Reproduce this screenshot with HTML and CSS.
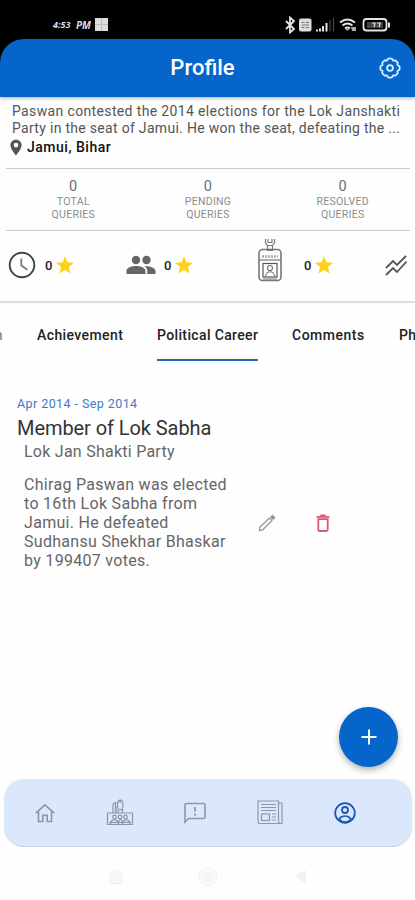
FILE: index.html
```html
<!DOCTYPE html>
<html lang="en">
<head>
<meta charset="utf-8">
<title>Profile</title>
<link rel="stylesheet" href="styles.css">
</head>
<body>
<div class="top">
  <div class="status">
    <span class="clock">4:53</span><span class="clock pm">PM</span>
    <svg class="app" width="13" height="13" viewBox="0 0 13 13"><path fill="#ddd" d="M0 0h13v13H0z"/><path stroke="#bbb" d="M0 6.500h13M6.500 0v13" fill="none"/></svg>
    <svg class="indicators" width="106" height="18" viewBox="0 0 106 18" fill="none" stroke="#e4e4e4" stroke-width="1.500">
      <path d="M1 5l8 8-4 3.500V1.500L9 5l-8 8" stroke-width="1.800"/>
      <rect x="14" y="2.500" width="12.500" height="13" rx="2" fill="#ddd" stroke="none"/>
      <path d="M16.500 6.500h3M21 6.500h3M16.500 11.500h3M21 11.500h3M17 9h7" stroke="#777" stroke-width="1.200"/>
      <path d="M32 15.500v-2M35 15.500v-3M38 15.500V10M41.500 15.500V7" stroke-width="2"/>
      <path d="M45 15.500V4M48.500 15.500V2" stroke="#444" stroke-width="1.300"/>
      <path d="M55 6.500q7.500-6 15 0M57.500 9.500q5-4 10 0M60 12.500q2.500-2 5 0" stroke-width="2"/>
      <path d="M62.500 15l-2-2h4zM66 11h5v4h-4" fill="#aaa" stroke="none"/>
      <rect x="78.500" y="3" width="23" height="11.500" rx="3" stroke-width="1.800"/>
      <path d="M82 6h16v6H82z" fill="#444" stroke="none"/><path d="M87 7h3l-1 4M92 7h3l-1 4" stroke-width="1.200"/>
      <path d="M104 6.500v5" stroke-width="2"/>
    </svg>
  </div>
  <header class="bar">
    <h1>Profile</h1>
    <svg class="gear" width="22" height="22" viewBox="0 0 22 22" fill="none" stroke="#dcecff" stroke-width="1.800"><path stroke-linejoin="round" d="M9 1.800q2-1 4 0l1 1.700 2.300-.2 2.400 2.400-.2 2.300 1.700 1q1 2 0 4l-1.700 1 .2 2.300-2.400 2.400-2.300-.2-1 1.700q-2 1-4 0l-1-1.700-2.300.2-2.400-2.400.2-2.300-1.700-1q-1-2 0-4l1.700-1-.2-2.300 2.400-2.400 2.300.2z"/><circle cx="11" cy="11" r="2.900"/></svg>
  </header>
</div>
<main>
  <section class="bio">
    <p class="b1">Paswan contested the 2014 elections for the Lok Janshakti</p>
    <p class="b2">Party in the seat of Jamui. He won the seat, defeating the ...</p>
    <div class="place">
      <svg width="12" height="17" viewBox="0 0 12 17"><path fill="#555" fill-rule="evenodd" d="M6 .5A5.600 5.600 0 0 0 .4 6.100C.4 10.300 6 16.500 6 16.500s5.600-6.200 5.600-10.400A5.600 5.600 0 0 0 6 .5zm0 3.300a2.300 2.300 0 1 1 0 4.600 2.300 2.300 0 0 1 0-4.600z"/></svg>
      <span>Jamui, Bihar</span>
    </div>
  </section>
  <section class="stats">
    <div class="stat"><b>0</b><span>TOTAL</span><span>QUERIES</span></div>
    <div class="stat"><b>0</b><span>PENDING</span><span>QUERIES</span></div>
    <div class="stat"><b>0</b><span>RESOLVED</span><span>QUERIES</span></div>
  </section>
  <section class="scores">
    <div class="score s1">
      <svg width="28" height="28" viewBox="0 0 28 28" fill="none" stroke="#444"><circle cx="14" cy="14" r="12.300" stroke-width="1.900"/><path d="M13.300 7.500v7l6 4.200" stroke="#777" stroke-width="1.700"/></svg>
      <span>0</span>
      <svg class="star" width="18" height="18" viewBox="0 0 18 18"><path d="M9 .2l2.400 6.100 6.500.4-5 4.200 1.700 6.600L9 13.900l-5.600 3.600 1.700-6.600-5-4.200 6.500-.4z"/></svg>
    </div>
    <div class="score s2">
      <svg width="30" height="20" viewBox="0 0 30 20" fill="#666"><circle cx="10" cy="5" r="4.200"/><circle cx="20.500" cy="5" r="4.200"/><path d="M.5 19v-3c0-3.200 5-5 9.500-5s9.500 1.800 9.500 5v3zM21.300 19v-3c0-2-1-3.700-2.800-4.800 4.800-.4 11 1.500 11 4.800v3z"/><path d="M15.300.5v9" stroke="#fff" stroke-width="1.300"/></svg>
      <span>0</span>
      <svg class="star" width="18" height="18" viewBox="0 0 18 18"><path d="M9 .2l2.400 6.100 6.500.4-5 4.200 1.700 6.600L9 13.900l-5.600 3.600 1.700-6.600-5-4.200 6.500-.4z"/></svg>
    </div>
    <div class="score s3">
      <svg class="badge" width="24" height="44" viewBox="0 0 24 44" fill="none" stroke="#777" stroke-width="1.200"><path d="M7.500 1v4l2 2.500h5l2-2.500V1M10 1v3.500h4V1M9.500 7.500v5h5v-5"/><rect x="1" y="11.500" width="22" height="31" rx="3.500" stroke-width="1.600"/><path d="M1 22h22"/><path d="M4 18.500h16" stroke="#aaa" stroke-width="2.500" stroke-dasharray="2 1"/><rect x="5" y="25.500" width="14" height="13.500" stroke="#555"/><circle cx="12" cy="30" r="2.500"/><path d="M7.500 39c0-7 9-7 9 0M5 41h14"/></svg>
      <span>0</span>
      <svg class="star" width="18" height="18" viewBox="0 0 18 18"><path d="M9 .2l2.400 6.100 6.500.4-5 4.200 1.700 6.600L9 13.900l-5.600 3.600 1.700-6.600-5-4.200 6.500-.4z"/></svg>
    </div>
    <svg class="trend" width="22" height="21" viewBox="0 0 22 21" fill="none" stroke="#555" stroke-width="1.800"><path d="M1 13l7-7 4 4 9-9M1 20l7-7 4 4 9.500-10.500"/></svg>
  </section>
  <nav class="tabs">
    <div class="tab cut"><span>n</span></div>
    <div class="tab t1">Achievement</div>
    <div class="tab t2 on">Political Career</div>
    <div class="tab t3">Comments</div>
    <div class="tab t4">Photos</div>
  </nav>
  <article class="career">
    <p class="date">Apr 2014 - Sep 2014</p>
    <h2>Member of Lok Sabha</h2>
    <p class="party">Lok Jan Shakti Party</p>
    <div class="detail">
      <p>Chirag Paswan was elected<br>to 16th Lok Sabha from<br>Jamui. He defeated<br>Sudhansu Shekhar Bhaskar<br>by 199407 votes.</p>
      <svg class="pencil" width="18" height="18" viewBox="0 0 18 18" fill="none" stroke="#999" stroke-width="1.300"><path stroke-linejoin="round" d="M1.500 16.500l.3-3.200L11.500 4l2.500 2.500L4.500 16z"/><path d="M13 3l1.500-1.500 2.200 2.200L15.200 5.200z" fill="#777"/></svg>
      <svg class="trash" width="14" height="18" viewBox="0 0 14 18" fill="none" stroke="#df5872" stroke-width="1.800"><path d="M.5 2.800h13M4.300 1.500h5.400M2.300 5.200h9.400v10.300q0 1.500-1.500 1.500H3.800q-1.500 0-1.500-1.500z"/></svg>
    </div>
  </article>
</main>
<button class="fab" aria-label="Add"><svg width="16" height="16" viewBox="0 0 16 16" stroke="#fff" stroke-width="2"><path d="M8 .5v15M.5 8h15"/></svg></button>
<nav class="dock">
  <svg width="20" height="20" viewBox="0 0 20 20" fill="none" stroke="#8b95ae" stroke-width="1.600"><path d="M.8 10.200L10 1.800l9.200 8.400M3.500 8.500V18.500h4.300v-6.300h4.400v6.300h4.300V8.500"/></svg>
  <svg width="28" height="27" viewBox="0 0 28 27" fill="none" stroke="#8b95a8" stroke-width="1.200"><path d="M1.500 14h25v11.500h-25zM7 14V6q0-2 2.500-2.500v9M10 14V7"/><ellipse cx="14.200" cy="6" rx="2.800" ry="4.800"/><path d="M12 11v3M16.500 10v4M14.200 1v3"/><circle cx="8.500" cy="18" r="1.800"/><circle cx="14" cy="18" r="1.800"/><circle cx="19.500" cy="18" r="1.800"/><path d="M4.500 25c0-5 7-6 8 0 0-6 4-6 4 0 1-6 7-5 7.500 0M3 23.500h22"/></svg>
  <svg width="22" height="22" viewBox="0 0 22 22" fill="none" stroke="#8b95ae" stroke-width="1.600"><path d="M1 20V3q0-1.500 1.500-1.500h17Q21 1.500 21 3v12q0 1.500-1.500 1.500H4.500z"/><path d="M11 5v4.500M11 11.500v2.200" stroke-width="1.800"/></svg>
  <svg width="26" height="25" viewBox="0 0 26 25" fill="none" stroke="#8e98aa" stroke-width="1.200"><path d="M1 1h20.500v19.500q0 3 1.700 3H3q-2 0-2-2zM21.500 3h3.500v20.500h-2"/><path d="M4 4.500h15M4 7.500h15M4 10.500h15M15 14h4M15 17h4M15 20h4"/><rect x="4.500" y="14" width="8" height="6.500"/></svg>
  <svg width="22" height="22" viewBox="0 0 22 22" fill="none" stroke="#1759b5" stroke-width="1.800"><circle cx="11" cy="11" r="9.800"/><circle cx="11" cy="8" r="3"/><path d="M5 17c3-4 9-4 12 0-3 4-9 4-12 0" stroke-width="1.600"/></svg>
</nav>
<footer class="system">
  <svg width="14" height="14" viewBox="0 0 14 14"><rect width="14" height="13" rx="2" fill="#f8f8f8"/><path d="M0 13.500h14" stroke="#eee"/></svg>
  <svg width="20" height="20" viewBox="0 0 20 20"><circle cx="10" cy="10" r="9" fill="#fafafa" stroke="#f0f0f0"/><circle cx="10" cy="10" r="5" fill="#f5f5f5"/></svg>
  <svg width="14" height="16" viewBox="0 0 14 16"><path d="M1 7l12-6v14z" fill="#f2f2f2"/></svg>
</footer>
</body>
</html>
```
FILE: styles.css
```css
* { box-sizing: border-box; margin: 0; padding: 0; }
body { width: 415px; height: 900px; overflow: hidden; background: #fefefe; font-family: Roboto, sans-serif; display: flex; flex-direction: column; }
svg { display: block; flex: none; }
p, span, h1, h2, .tab { white-space: nowrap; }
.top { background: #000; flex: none; }
.status { height: 39px; display: flex; align-items: center; padding: 10px 0 0 53px; }
.clock { color: #ddd; font: italic 700 9px/12px "Open Sans", sans-serif; width: 23px; }
.clock.pm { width: 18px; font-size: 10px; }
.indicators { margin-left: 177px; }
.app { margin-left: 1px; }
.bar { height: 58px; background: #0565cb; border-radius: 24px 24px 0 0; position: relative; box-shadow: 0 1px 4px rgba(0,0,0,.35); text-align: center; }
.bar h1 { font-size: 22px; line-height: 58px; font-weight: 500; color: #fff; padding-right: 10px; }
.gear { position: absolute; right: 14px; top: 18px; }
main { flex: none; height: 608px; }
.bio { height: 71px; padding: 6px 12px 0; color: #555; font-size: 14px; line-height: 17px; letter-spacing: .36px; }
.b2 { letter-spacing: .3px; }
.place { display: flex; gap: 4px; margin-left: -2px; margin-top: 2px; height: 17px; align-items: center; color: #111; font-weight: 500; letter-spacing: .5px; }
.place span { margin-left: 1px; }
.stats { margin: 0 5px 0 6px; height: 63px; border: solid #ccc; border-width: 1px 0; display: grid; grid-template-columns: repeat(3, 134.700px); }
.stat { display: flex; flex-direction: column; align-items: center; padding-top: 9px; font-size: 10.500px; line-height: 13px; color: #8c8c8c; letter-spacing: .3px; }
.stat b { font-weight: 400; font-size: 14.500px; line-height: 17px; color: #65707a; }
.scores { height: 72px; border-bottom: 2px solid #ddd; display: flex; align-items: center; padding-bottom: 2px; }
.score { display: flex; align-items: center; color: #222; font-size: 13px; font-weight: 500; }
.score span { width: 8px; }
.star { fill: #ffd21a; margin-left: 3px; }
.s1 { padding-left: 8px; width: 126px; }
.s1 span { margin-left: 9px; }
.s2 { width: 132px; }
.s2 span { margin-left: 8px; }
.s3 { width: 127px; }
.s3 span { margin-left: 22px; }
.badge { margin-top: -10px; }
.tabs { height: 58px; display: flex; gap: 34px; font-size: 14px; font-weight: 500; color: #222; line-height: 20px; padding-top: 22px; overflow: hidden; letter-spacing: .4px; }
.tab { flex: none; height: 36px; }
.cut { width: 3px; overflow: hidden; display: flex; justify-content: flex-end; color: #888; }
.t1 { width: 86px; }
.t2 { width: 101px; letter-spacing: .36px; }
.t3 { width: 73px; letter-spacing: .5px; }
.on { border-bottom: 2px solid #2a6ab6; }
.career { padding: 34px 17px 0; color: #666; }
.date { font-size: 12.500px; line-height: 17px; color: #3b7cc5; letter-spacing: .42px; }
.career h2 { font-size: 20px; font-weight: 400; line-height: 30px; color: #333; margin-top: 1px; letter-spacing: -.07px; }
.party { font-size: 16px; line-height: 20px; margin: -1px 0 0 7px; letter-spacing: .25px; }
.detail { display: flex; align-items: center; margin: 13px 0 0 7px; font-size: 16px; line-height: 19px; letter-spacing: .3px; }
.detail p { width: 234px; }
.trash { margin-left: 40px; }
.fab { align-self: flex-end; margin: 2px 17px 0 0; width: 59px; height: 60px; border: 0; border-radius: 50%; background: #0565cb; display: flex; align-items: center; justify-content: center; box-shadow: 0 3px 6px rgba(0,0,0,.3); flex: none; }
.dock { flex: none; margin: 12px 3px 0 4px; height: 68px; border-radius: 20px; background: #dbe8fc; border-bottom: 1px solid #cbd3e0; display: grid; grid-template-columns: repeat(5, 75.200px); padding-left: 3px; align-items: center; justify-items: center; }
.system { display: flex; gap: 75px; padding: 20px 0 0 109px; align-items: center; }
```
